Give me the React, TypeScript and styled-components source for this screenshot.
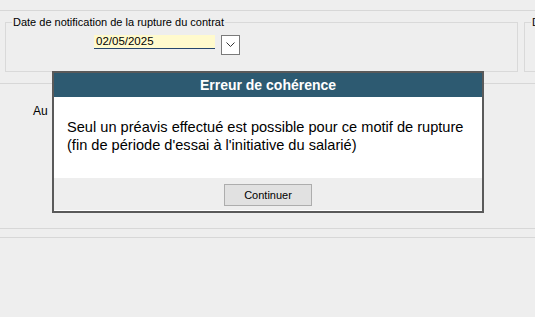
import styled, { createGlobalStyle } from 'styled-components'

const GlobalStyle = createGlobalStyle`
  html, body {
    margin: 0;
    padding: 0;
    background: #eeeeee;
    overflow: hidden;
  }
  body {
    font-family: "Liberation Sans", Arial, sans-serif;
    color: #000;
  }
`

const Page = styled.div`
  position: relative;
  width: 535px;
  height: 317px;
  overflow: hidden;
  background: #eeeeee;
`

const TopStrip = styled.div`
  height: 10px;
  border-bottom: 1px solid #d7d7d7;
`

const GroupRow = styled.div`
  display: flex;
  gap: 6px;
  padding-left: 5px;
  margin-top: 4px;
`

const GroupBox = styled.fieldset<{ $width: number }>`
  flex: none;
  box-sizing: border-box;
  width: ${p => p.$width}px;
  height: 57px;
  margin: 0;
  padding: 0;
  min-width: 0;
  border: 1px solid #d9d9d9;
`

const Legend = styled.legend`
  font-size: 11px;
  line-height: 14px;
  padding: 0 1px;
  margin-left: 6px;
  white-space: nowrap;
`

const DateRow = styled.div`
  display: flex;
  align-items: flex-start;
  gap: 6px;
  margin-top: 6px;
  padding-left: 88px;
`

const DateInput = styled.div`
  box-sizing: border-box;
  width: 121px;
  height: 14px;
  padding-left: 2px;
  background: #fffacd;
  border-bottom: 1px solid #26466d;
  font-size: 11.5px;
  line-height: 13px;
`

const DropButton = styled.div`
  box-sizing: border-box;
  width: 19px;
  height: 20px;
  background: #ffffff;
  border: 1px solid #7a7a7a;
  display: flex;
  align-items: center;
  justify-content: center;
`

const Separator = styled.div<{ $gap: number }>`
  margin-top: ${p => p.$gap}px;
  height: 1px;
  background: #d7d7d7;
`

const PeriodRow = styled.div`
  padding: 17px 0 0 33px;
  height: 14px;
`

const FieldLabel = styled.span`
  font-size: 12px;
  line-height: 14px;
`

const Dialog = styled.div`
  position: absolute;
  left: 52px;
  top: 71px;
  width: 432px;
  box-sizing: border-box;
  border: 2px solid #5a5a5a;
  background: #ffffff;
`

const DialogHeader = styled.div`
  height: 24px;
  background: #2d5a71;
  color: #ffffff;
  font-weight: bold;
  font-size: 14px;
  line-height: 24px;
  text-align: center;
`

const DialogBody = styled.div`
  box-sizing: border-box;
  height: 81px;
  padding: 21px 13px 0;
  font-size: 14.6px;
  line-height: 18px;
  white-space: nowrap;
  color: #000;
`

const DialogFooter = styled.div`
  height: 33px;
  background: #eeeeee;
  border-bottom: 1px solid #ffffff;
  display: flex;
  justify-content: center;
  padding-top: 6px;
  box-sizing: border-box;
`

const Button = styled.button`
  box-sizing: border-box;
  width: 88px;
  height: 22px;
  background: #e1e1e1;
  border: 1px solid #adadad;
  border-radius: 0;
  font-family: "Liberation Sans", Arial, sans-serif;
  font-size: 11px;
  color: #000;
  padding: 0;
`

const App = () => {
  return (
    <Page>
      <GlobalStyle />
      <TopStrip />
      <GroupRow>
        <GroupBox $width={513}>
          <Legend>Date de notification de la rupture du contrat</Legend>
          <DateRow>
            <DateInput>02/05/2025</DateInput>
            <DropButton>
              <svg width="9" height="6" viewBox="0 0 9 6">
                <path d="M0.5 0.5 L4.5 4.5 L8.5 0.5" fill="none" stroke="#333" strokeWidth="1" />
              </svg>
            </DropButton>
          </DateRow>
        </GroupBox>
        <GroupBox $width={120}>
          <Legend>Date</Legend>
        </GroupBox>
      </GroupRow>
      <Separator $gap={11} />
      <PeriodRow>
        <FieldLabel>Au</FieldLabel>
      </PeriodRow>
      <Separator $gap={113} />
      <Separator $gap={8} />

      <Dialog>
        <DialogHeader>Erreur de cohérence</DialogHeader>
        <DialogBody>
          Seul un préavis effectué est possible pour ce motif de rupture
          <br />
          (fin de période d'essai à l'initiative du salarié)
        </DialogBody>
        <DialogFooter>
          <Button>Continuer</Button>
        </DialogFooter>
      </Dialog>
    </Page>
  )
}

export default App
